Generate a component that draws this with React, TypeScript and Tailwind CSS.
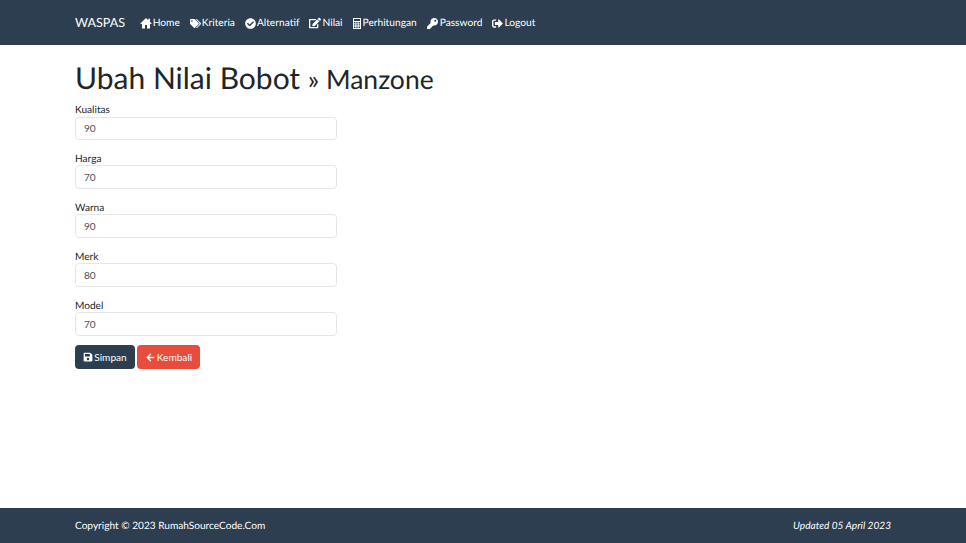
import React from 'react';
import { FaTags, FaCheckCircle, FaEdit, FaKey, FaSignOutAlt, FaSave } from 'react-icons/fa';
import { ArrowLeft } from 'lucide-react';

const HomeIcon = () => (
  <svg width="12" height="12" viewBox="0 0 24 24" fill="currentColor">
    <path d="M12 2 L0.5 13 L2.5 14.5 L4 13.2 V23 H10 V16 H14 V23 H20 V13.2 L21.5 14.5 L23.5 13 L20 9.6 V3.5 H16.5 V6.3 Z" />
  </svg>
);

const CalcIcon = () => (
  <svg width="8" height="11" viewBox="0 0 8 11" fill="currentColor">
    <path fillRule="evenodd" d="M0.5 0 H7.5 Q8 0 8 0.5 V10.5 Q8 11 7.5 11 H0.5 Q0 11 0 10.5 V0.5 Q0 0 0.5 0 Z M1 1 V3 H7 V1 Z M1 4 V5.4 H2.4 V4 Z M3.3 4 V5.4 H4.7 V4 Z M5.6 4 V5.4 H7 V4 Z M1 6.2 V7.6 H2.4 V6.2 Z M3.3 6.2 V7.6 H4.7 V6.2 Z M5.6 6.2 V7.6 H7 V6.2 Z M1 8.4 V9.9 H2.4 V8.4 Z M3.3 8.4 V9.9 H4.7 V8.4 Z M5.6 8.4 V9.9 H7 V8.4 Z" />
  </svg>
);

const menu = [
  { icon: <HomeIcon />, label: 'Home', gap: 'gap-[1px]' },
  { icon: <FaTags size={11} />, label: 'Kriteria', gap: 'gap-[1px]' },
  { icon: <FaCheckCircle size={11} />, label: 'Alternatif', gap: 'gap-[1px]' },
  { icon: <FaEdit size={12} />, label: 'Nilai', gap: 'gap-[1px]' },
  { icon: <CalcIcon />, label: 'Perhitungan', gap: 'gap-[2px]' },
  { icon: <FaKey size={11} />, label: 'Password', gap: 'gap-[2px]' },
  { icon: <FaSignOutAlt size={11} />, label: 'Logout', gap: 'gap-[1px]' },
];

const fields = [
  { label: 'Kualitas', value: '90' },
  { label: 'Harga', value: '70' },
  { label: 'Warna', value: '90' },
  { label: 'Merk', value: '80' },
  { label: 'Model', value: '70' },
];

const App = () => {
  return (
    <div className="h-[543px] flex flex-col bg-white overflow-hidden font-['Lato',sans-serif] text-[10.1px] text-[#212529] [text-rendering:geometricPrecision]">
      {/* Navbar */}
      <nav className="h-[45px] shrink-0 bg-[#2c3e50] px-[75px] pt-[1px] flex items-center text-white">
        <div className="text-[12.6px] mr-[14.5px]">WASPAS</div>
        <div className="flex gap-[10px] pt-[1px] text-[10.2px]">
          {menu.map((item) => (
            <a key={item.label} className={`flex items-center ${item.gap}`}>
              {item.icon}
              {item.label}
            </a>
          ))}
        </div>
      </nav>

      {/* Content */}
      <main className="flex-1 px-[75px] pt-[14px]">
        <h1 className="text-[30px] leading-[38px] mb-[4.4px] font-normal">
          Ubah Nilai Bobot <span className="text-[26.5px]">» Manzone</span>
        </h1>
        <form className="w-[262px]">
          {fields.map((f) => (
            <div key={f.label} className="mb-[10.8px]">
              <label className="block h-[14.2px] leading-[16px]">{f.label}</label>
              <input
                readOnly
                value={f.value}
                className="block w-full h-[23.8px] px-[8px] rounded-[4px] border border-[#e4e7ea] bg-white text-[#495057] outline-none"
              />
            </div>
          ))}
          <div className="flex gap-[2px] -mt-[1px] text-white">
            <button type="button" className="h-[24px] w-[60px] rounded-[4px] bg-[#2c3e50] flex items-center justify-center gap-[1px]">
              <FaSave size={10} /> Simpan
            </button>
            <button type="button" className="h-[24px] w-[63px] rounded-[4px] bg-[#e74c3c] flex items-center justify-center gap-[1px]">
              <ArrowLeft size={11} strokeWidth={3} /> Kembali
            </button>
          </div>
        </form>
      </main>

      {/* Footer */}
      <footer className="h-[35px] shrink-0 bg-[#2c3e50] px-[75px] pt-[2px] flex items-center justify-between text-white">
        <div>Copyright © 2023 RumahSourceCode.Com</div>
        <em>Updated 05 April 2023</em>
      </footer>
    </div>
  );
};

export default App;
